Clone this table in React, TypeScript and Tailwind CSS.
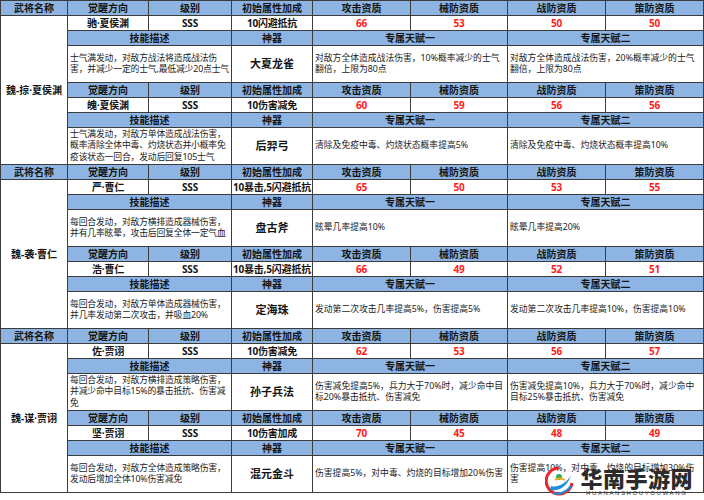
import React from "react";

type Form = {
  title: string;
  level: string;
  bonus: string;
  stats: [number, number, number, number];
  skill: string;
  weapon: string;
  talent1: string;
  talent2: string;
};

type Hero = { name: string; forms: [Form, Form] };

const heroes: Hero[] = [
  {
    name: "魏-掠·夏侯渊",
    forms: [
      {
        title: "驰·夏侯渊",
        level: "SSS",
        bonus: "10闪避抵抗",
        stats: [66, 53, 50, 50],
        skill: "士气满发动，对敌方战法将造成战法伤害，并减少一定的士气,最低减少20点士气",
        weapon: "大夏龙雀",
        talent1: "对敌方全体造成战法伤害，10%概率减少的士气翻倍，上限为80点",
        talent2: "对敌方全体造成战法伤害，20%概率减少的士气翻倍，上限为80点",
      },
      {
        title: "魄·夏侯渊",
        level: "SSS",
        bonus: "10伤害减免",
        stats: [60, 59, 56, 56],
        skill: "士气满发动，对敌方单体造成战法伤害，概率清除全体中毒、灼烧状态并小概率免疫该状态一回合，发动后回复105士气",
        weapon: "后羿弓",
        talent1: "清除及免疫中毒、灼烧状态概率提高5%",
        talent2: "清除及免疫中毒、灼烧状态概率提高10%",
      },
    ],
  },
  {
    name: "魏-袭·曹仁",
    forms: [
      {
        title: "严·曹仁",
        level: "SSS",
        bonus: "10暴击,5闪避抵抗",
        stats: [65, 50, 53, 55],
        skill: "每回合发动，对敌方横排造成器械伤害，并有几率眩晕，攻击后回复全体一定气血",
        weapon: "盘古斧",
        talent1: "眩晕几率提高10%",
        talent2: "眩晕几率提高20%",
      },
      {
        title: "浩·曹仁",
        level: "SSS",
        bonus: "10暴击,5闪避抵抗",
        stats: [66, 49, 52, 51],
        skill: "每回合发动，对敌方单体造成器械伤害，并几率发动第二次攻击，并吸血20%",
        weapon: "定海珠",
        talent1: "发动第二次攻击几率提高5%，伤害提高5%",
        talent2: "发动第二次攻击几率提高10%，伤害提高10%",
      },
    ],
  },
  {
    name: "魏-谋·贾诩",
    forms: [
      {
        title: "佐·贾诩",
        level: "SSS",
        bonus: "10伤害减免",
        stats: [62, 53, 56, 57],
        skill: "每回合发动，对敌方横排造成策略伤害，并减少命中目标15%的暴击抵抗、伤害减免",
        weapon: "孙子兵法",
        talent1: "伤害减免提高5%，兵力大于70%时，减少命中目标20%暴击抵抗、伤害减免",
        talent2: "伤害减免提高10%，兵力大于70%时，减少命中目标25%暴击抵抗、伤害减免",
      },
      {
        title: "坚·贾诩",
        level: "SSS",
        bonus: "10伤害加成",
        stats: [70, 45, 48, 49],
        skill: "每回合发动，对敌方全体造成策略伤害，发动后增加全体10%伤害减免",
        weapon: "混元金斗",
        talent1: "伤害提高5%，对中毒、灼烧的目标增加20%伤害",
        talent2: "伤害提高10%，对中毒、灼烧的目标增加30%伤害",
      },
    ],
  },
];

const statHeads = ["攻击资质", "械防资质", "战防资质", "策防资质"];

function Head({ children, span }: { children: React.ReactNode; span?: string }) {
  return (
    <div className={`${span ?? ""} bg-[#8db4e2] flex items-center justify-center text-[10px] font-bold text-[#141414] leading-none`}>
      {children}
    </div>
  );
}

function Val({ children, red }: { children: React.ReactNode; red?: boolean }) {
  return (
    <div
      className={`bg-white flex items-center justify-center whitespace-nowrap tracking-[-0.2px] text-[10px] font-bold leading-none ${
        red ? "text-[#ff1a1a]" : "text-[#141414]"
      }`}
    >
      {children}
    </div>
  );
}

function Desc({ children, span, tight }: { children: React.ReactNode; span: string; tight?: boolean }) {
  return (
    <div
      className={`${span} bg-white flex items-center text-[8.8px] leading-[11.5px] text-[#1a1a1a] ${
        tight ? "pl-[2px] pr-0 tracking-[-0.15px]" : "pl-[2px] pr-[1px]"
      }`}
    >
      <p>{children}</p>
    </div>
  );
}

function FormRows({ form, first }: { form: Form; first: boolean }) {
  return (
    <>
      {!first && (
        <>
          <Head>觉醒方向</Head>
          <Head>级别</Head>
          <Head>初始属性加成</Head>
          {statHeads.map((h) => (
            <Head key={h}>{h}</Head>
          ))}
        </>
      )}
      <Val>{form.title}</Val>
      <Val>{form.level}</Val>
      <Val>{form.bonus}</Val>
      {form.stats.map((s, i) => (
        <Val key={i} red>
          {s}
        </Val>
      ))}
      <Head span="col-span-2">技能描述</Head>
      <Head>神器</Head>
      <Head span="col-span-2">专属天赋一</Head>
      <Head span="col-span-2">专属天赋二</Head>
      <Desc span="col-span-2" tight>
        {form.skill}
      </Desc>
      <div className="bg-white flex items-center justify-center text-[11px] font-bold text-[#141414]">{form.weapon}</div>
      <Desc span="col-span-2">{form.talent1}</Desc>
      <Desc span="col-span-2">{form.talent2}</Desc>
    </>
  );
}

function Section({ hero }: { hero: Hero }) {
  return (
    <div className="grid grid-cols-[66px_80px_82px_80px_97px_96px_97px_97px] grid-rows-[14px_14px_14px_36px_14px_14px_14px_36px] gap-px">
      <Head>武将名称</Head>
      <Head>觉醒方向</Head>
      <Head>级别</Head>
      <Head>初始属性加成</Head>
      {statHeads.map((h) => (
        <Head key={h}>{h}</Head>
      ))}
      <div className="row-span-7 bg-white flex items-center justify-center whitespace-nowrap text-[10px] font-bold text-[#141414]">
        {hero.name}
      </div>
      <FormRows form={hero.forms[0]} first />
      <FormRows form={hero.forms[1]} first={false} />
    </div>
  );
}

function Watermark() {
  return (
    <div className="absolute right-[11px] bottom-[3px] flex items-center gap-[5px] pointer-events-none">
      <svg width="30" height="31" viewBox="0 0 30 31">
        <path d="M14 2 A13 13 0 1 0 27 17" fill="none" stroke="#e8262b" strokeWidth="3" />
        <path d="M6 20 C12 22 20 18 26 10 C22 20 14 26 5 24 Z" fill="#1d8fd6" />
        <path d="M8 27 C14 29 22 26 26 20" fill="none" stroke="#1d8fd6" strokeWidth="2" />
        <circle cx="14" cy="11" r="3" fill="#2bb24c" />
        <path d="M10 14 C12 12 17 12 20 14" fill="none" stroke="#f5a623" strokeWidth="2" />
      </svg>
      <div className="flex flex-col items-center">
        <span className="text-[22px] leading-[22px] font-black text-[#2b2b2b] tracking-[0.5px]">华南手游网</span>
        <span className="text-[6px] leading-[8px] text-[#333] tracking-[1.6px] font-['Liberation_Sans',sans-serif]">
          HUANANSHOUYOUWANG
        </span>
      </div>
    </div>
  );
}

export default function App() {
  return (
    <div className="relative w-[704px] h-[500px] bg-white overflow-hidden font-['Noto_Sans','Noto_Sans_CJK_SC',sans-serif]">
      <div className="flex flex-col gap-px bg-[#3c3c3c] border border-[#3c3c3c] w-[704px]">
        {heroes.map((h) => (
          <Section key={h.name} hero={h} />
        ))}
      </div>
      <Watermark />
    </div>
  );
}
